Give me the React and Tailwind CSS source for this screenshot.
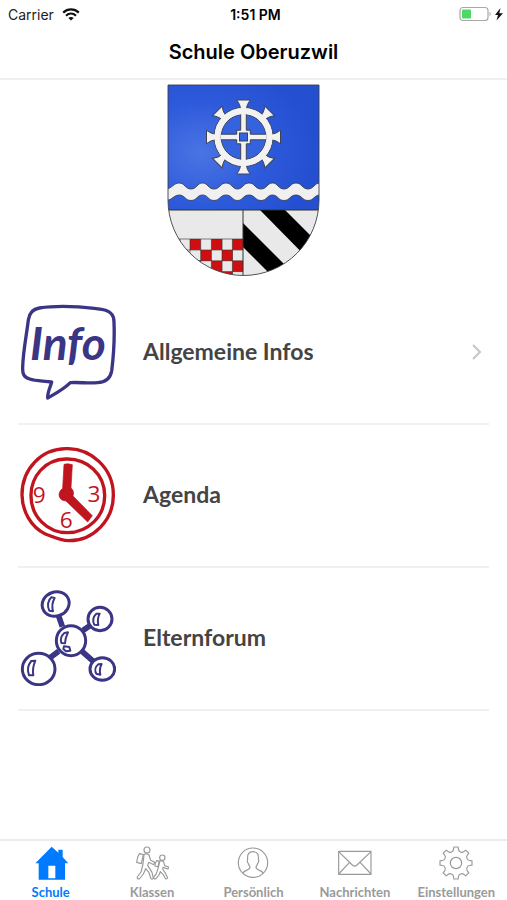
import React, { useState } from "react";

const NAVY = "#3b3585";
const RED = "#c0141f";

function Wifi() {
  return (
    <svg viewBox="0 0 18 13" className="h-[13px] w-[18px]" fill="none" stroke="#111" strokeWidth="2.2" aria-hidden="true">
      <path d="M1.2 4.6C5.6 .4 12.4 .4 16.8 4.6" />
      <path d="M4 7.7c2.9-2.7 7.1-2.7 10 0" />
      <path d="M9 12.6 6.3 9.9c1.5-1.3 3.9-1.3 5.4 0z" fill="#111" stroke="none" />
    </svg>
  );
}

function Battery() {
  return (
    <svg viewBox="0 0 44 16" className="h-4 w-11" aria-hidden="true">
      <rect x="1" y="1.5" width="28" height="13" rx="3" fill="#fff" stroke="#a8a8a8" strokeWidth="1.2" />
      <rect x="3" y="3.5" width="9" height="9" rx="1" fill="#4cd964" />
      <path d="M30.5 6v4c1.6-.4 1.6-3.6 0-4z" fill="#a8a8a8" />
      <path d="M41.500 2 36 9h3l-1.500 5.500L44 7.200h-3.700z" fill="#111" />
    </svg>
  );
}

const teeth = [0, 45, 90, 135, 180, 225, 270, 315];
const checks = [
  [23, 155], [44.4, 155], [65.4, 155],
  [33.7, 166], [55, 166],
  [23, 176.8], [44.4, 176.8], [65.4, 176.8],
  [33.7, 187.6], [55, 187.6],
];

function Crest() {
  return (
    <svg viewBox="0 0 153 193" className="h-[193px] w-[153px]" role="img" aria-label="Wappen Oberuzwil">
      <defs>
        <clipPath id="shield">
          <path d="M1 1H152V116A75.5 75.5 0 0 1 1 116Z" />
        </clipPath>
        <radialGradient id="sky" cx="0.22" cy="0.55" r="0.75">
          <stop offset="0" stopColor="#4a74e4" />
          <stop offset="0.55" stopColor="#2d5adb" />
          <stop offset="1" stopColor="#244fd0" />
        </radialGradient>
      </defs>
      <g clipPath="url(#shield)">
        <rect width="153" height="193" fill="#e9e9e9" />
        <rect width="153" height="126" fill="url(#sky)" />
        <path
          d="M0 105C5 104 7 99 12 99C18 99 18 105 24 105C30 105 30 99 35.5 99C41 99 41 105 47 105C53 105 53 99 59 99C65 99 65 105 70.5 105C76 105 76 99 82 99C88 99 88 105 94 105C100 105 100 99 105.5 99C111 99 111 105 117 105C123 105 123 99 129 99C135 99 135 105 141 105C147 105 147 99 153 99V111C147 111 147 116.5 141 116.5C135 116.5 135 111 129 111C123 111 123 116.5 117 116.5C111 116.5 111 111 105.5 111C100 111 100 116.5 94 116.5C88 116.5 88 111 82 111C76 111 76 116.5 70.5 116.5C65 116.5 65 111 59 111C53 111 53 116.5 47 116.5C41 116.5 41 111 35.5 111C30 111 30 116.5 24 116.5C18 116.5 18 111 12 111C7 111 5 116 0 116.5Z"
          fill="#f0f0f0"
          stroke="#3c4256"
          strokeWidth="0.9"
        />
        {checks.map(([x, y]) => (
          <rect key={`${x}-${y}`} x={x} y={y} width="10.7" height="10.9" fill="#d00d10" />
        ))}
        <path d="M0 155H76M0 166H76M0 176.8H76M0 187.6H76M13 155V193M23 155V193M33.7 155V193M44.4 155V193M55 155V193M65.4 155V193" stroke="#333" strokeWidth="0.6" />
        <path d="M93 126H118L153 161V187ZM76 139L132 195H108L76 163Z" fill="#000" />
        <path d="M0 126H153M76 126V193" stroke="#333" strokeWidth="1" />
      </g>
      <g transform="translate(76.5 53)" fill="#f2f2f2" stroke="#3c4256" strokeWidth="1">
        {teeth.map((deg) => (
          <path key={deg} transform={`rotate(${deg})`} d="M-3 -28C-3 -31 -4.5 -34 -6.8 -37H6.8C4.5 -34 3 -31 3 -28Z" />
        ))}
        <circle r="29.5" />
        <circle r="22.5" fill="#3563de" />
        <path d="M-2.8 -23.5H2.8V-6.8H6.8V-2.8H23.5V2.8H6.8V6.8H2.8V23.5H-2.8V6.8H-6.8V2.8H-23.5V-2.8H-6.8V-6.8H-2.8Z" />
        <circle r="26" fill="none" stroke="#f2f2f2" strokeWidth="6" />
        {teeth.map((deg) => (
          <rect key={deg} transform={`rotate(${deg})`} x="-2.6" y="-31" width="5.2" height="4" stroke="none" />
        ))}
        <rect x="-4" y="-4" width="8" height="8" fill="#3563de" />
      </g>
      <path d="M1 1H152V116A75.5 75.5 0 0 1 1 116Z" fill="none" stroke="#3a3f4d" strokeWidth="0.9" />
    </svg>
  );
}

function InfoIcon() {
  return (
    <svg viewBox="30 27 288 288" className="h-24 w-24 shrink-0" aria-hidden="true">
      <path
        d="M88 39C140 31 220 34 275 43C302 47 313 59 312 84C314 130 311 180 305 228C301 251 286 262 262 263C236 266 208 261 181 263C160 284 136 296 113 309C112 292 121 277 125 261C102 257 79 259 59 252C42 247 37 238 38 217C39 170 49 125 55 75C58 52 68 42 88 39Z"
        fill="none"
        stroke={NAVY}
        strokeWidth="10"
        strokeLinejoin="round"
      />
      <text x="60" y="195" fontSize="138" fontWeight="700" fontStyle="italic" fill={NAVY} className="font-['Lato',sans-serif]">
        Info
      </text>
    </svg>
  );
}

function ClockIcon() {
  return (
    <svg viewBox="30 27 288 288" className="h-24 w-24 shrink-0" aria-hidden="true">
      <g fill="none" stroke={RED} strokeWidth="10">
        <path d="M168 32C244 30 310 92 310 170C311 246 250 309 175 308C152 308 130 297 106 288C62 266 37 220 36 170C36 92 94 33 168 32Z" />
        <path d="M168 63C233 61 284 110 284 172C285 235 234 284 172 284C113 284 63 236 63 174C62 117 104 64 168 63Z" />
      </g>
      <path d="M162 79Q173 75 187 80L183 150Q194 158 189 174L247 233L233 252L168 189Q148 188 147 170Q148 158 158 151Z" fill={RED} stroke={RED} strokeWidth="2" strokeLinejoin="round" />
      <g fontSize="68" fontWeight="500" fill={RED} textAnchor="middle" className="font-['Open_Sans',sans-serif]">
        <text x="88" y="196">9</text>
        <text x="252" y="192">3</text>
        <text x="169" y="271">6</text>
      </g>
    </svg>
  );
}

function MoleculeIcon() {
  return (
    <svg viewBox="30 30 288 288" className="h-24 w-24 shrink-0" fill="none" stroke={NAVY} aria-hidden="true">
      <path d="M146 108L157 140M219 151L240 137M146 214L119 234M216 214L251 245" strokeWidth="17" />
      <g strokeWidth="9">
        <ellipse cx="137" cy="72" rx="41" ry="36" transform="rotate(-20 137 72)" />
        <ellipse cx="270" cy="117" rx="36" ry="35" />
        <ellipse cx="183" cy="182" rx="44" ry="45" />
        <ellipse cx="86" cy="267" rx="49" ry="47" />
        <ellipse cx="277" cy="267" rx="37" ry="34" />
      </g>
      <g strokeWidth="6" strokeLinejoin="round">
        <path d="M134 54L124 52C113 60 111 80 118 92L129 94C125 79 127 66 134 54Z" />
        <path d="M269 101L259 101C249 110 247 124 253 134L265 135C262 123 264 111 269 101Z" />
        <path d="M174 157L163 159C153 168 151 180 154 189L165 190C165 178 168 169 174 157Z" />
        <path d="M162 199L178 201L181 212L168 214L160 207Z" />
        <path d="M76 242L64 243C53 256 52 273 57 286L70 286C67 270 70 256 76 242Z" />
        <path d="M275 252L265 253C255 261 254 273 259 281L271 284C268 271 270 261 275 252Z" />
      </g>
    </svg>
  );
}

function HomeIcon() {
  return (
    <svg viewBox="101 34 102 102" className="size-[34px]" fill="currentColor" aria-hidden="true">
      <path fillRule="evenodd" d="M154 36L174 54V45H187V67L204 86H194V135H115V86H105ZM144 93V131H165V93Z" />
    </svg>
  );
}

function WalkersIcon() {
  return (
    <svg viewBox="405 34 102 102" className="size-[34px]" fill="none" stroke="currentColor" strokeWidth="3.5" strokeLinejoin="round" aria-hidden="true">
      <circle cx="441" cy="46" r="9" />
      <path d="M418 57L430 60L424 87L410 83Q412 66 418 57Z" />
      <path d="M432 59Q440 55 447 61L452 77L464 83L461 90L446 83L443 92L456 113L460 131Q455 136 452 130L447 114L437 102L430 118L418 133Q410 133 412 127L423 112L429 88Z" />
      <circle cx="487" cy="69" r="8" />
      <path d="M470 78L478 79L474 97L465 94Q464 85 470 78Z" />
      <path d="M479 80Q487 77 491 82L494 93L506 97L504 103L489 98L488 103L497 117L503 130Q498 136 495 130L489 119L481 111L477 121L468 132Q460 134 461 128L469 117L475 99Z" />
    </svg>
  );
}

function PersonIcon() {
  return (
    <svg viewBox="13 13 102 102" className="size-[34px]" fill="none" stroke="currentColor" strokeWidth="3.5" strokeLinejoin="round" aria-hidden="true">
      <circle cx="64" cy="63" r="44" />
      <path d="M34 95C35 84 55 88 55 77C55 73 51 71 50 65C46 61 46 57 48 53C46 38 52 30 64 30C76 30 82 38 80 53C82 57 82 61 78 65C77 71 73 73 73 77C73 88 93 84 94 95" />
    </svg>
  );
}

function MailIcon() {
  return (
    <svg viewBox="252 34 102 102" className="size-[34px]" fill="none" stroke="currentColor" strokeWidth="3.5" strokeLinejoin="round" aria-hidden="true">
      <rect x="254" y="50" width="97" height="69" />
      <path d="M254 51L295 91Q302 98 309 91L351 51M254 118L286 84M351 118L319 84" />
    </svg>
  );
}

function GearIcon() {
  return (
    <svg viewBox="-51 -51 102 102" className="size-[34px]" fill="none" stroke="currentColor" strokeWidth="3.5" strokeLinejoin="round" aria-hidden="true">
      <circle r="17" />
      {teeth.map((deg) => (
        <path key={deg} transform={`rotate(${deg})`} d="M-14 -33Q-8 -35 -7.5 -40L-6.5 -48H6.5L7.5 -40Q8 -35 14 -33" />
      ))}
    </svg>
  );
}

const rows = [
  { label: "Allgemeine Infos", Icon: InfoIcon, chevron: true },
  { label: "Agenda", Icon: ClockIcon },
  { label: "Elternforum", Icon: MoleculeIcon },
];

const tabs = [
  { label: "Schule", Icon: HomeIcon },
  { label: "Klassen", Icon: WalkersIcon },
  { label: "Persönlich", Icon: PersonIcon },
  { label: "Nachrichten", Icon: MailIcon },
  { label: "Einstellungen", Icon: GearIcon },
];

export default function App() {
  const [active, setActive] = useState("Schule");
  return (
    <div className="flex min-h-screen flex-col bg-white font-['Inter',sans-serif] text-black">
      <header className="border-b-2 border-[#f0f0f0]">
        <div className="grid h-7 grid-cols-3 items-center pr-1 pl-2 text-[14px]">
          <div className="flex items-center gap-2 text-[#222]">
            <span>Carrier</span>
            <Wifi />
          </div>
          <span className="text-center font-semibold">1:51 PM</span>
          <div className="flex justify-end">
            <Battery />
          </div>
        </div>
        <h1 className="flex h-[50px] items-center justify-center pb-0.5 text-[20px] font-semibold">Schule Oberuzwil</h1>
      </header>

      <main className="flex-1">
        <div className="flex justify-center pt-1 pb-[5px] pr-5">
          <Crest />
        </div>
        <ul className="px-[18px]">
          {rows.map(({ label, Icon, chevron }) => (
            <li key={label} className="border-b-2 border-[#f0f0f0]">
              <a href="#" className="flex h-[141px] items-center pr-1.5 pb-0.5 pl-0.5">
                <Icon />
                <span className="ml-[27px] flex-1 font-['Lato',sans-serif] text-[23px] font-bold text-[#444]">{label}</span>
                {chevron && (
                  <svg viewBox="0 0 12 18" className="h-[18px] w-3" fill="none" stroke="#c8c8c8" strokeWidth="2.2" aria-hidden="true">
                    <path d="M2 2l7 7-7 7" />
                  </svg>
                )}
              </a>
            </li>
          ))}
        </ul>
      </main>

      <nav className="grid grid-cols-5 border-t-2 border-[#ececec]">
        {tabs.map(({ label, Icon }) => (
          <button
            key={label}
            type="button"
            onClick={() => setActive(label)}
            className={`flex flex-col items-center gap-1 pt-[5px] font-['Lato',sans-serif] text-[13px] leading-4 font-bold ${
              active === label ? "text-[#007aff]" : "text-[#9a9a9a]"
            }`}
          >
            <Icon />
            {label}
          </button>
        ))}
      </nav>
    </div>
  );
}
